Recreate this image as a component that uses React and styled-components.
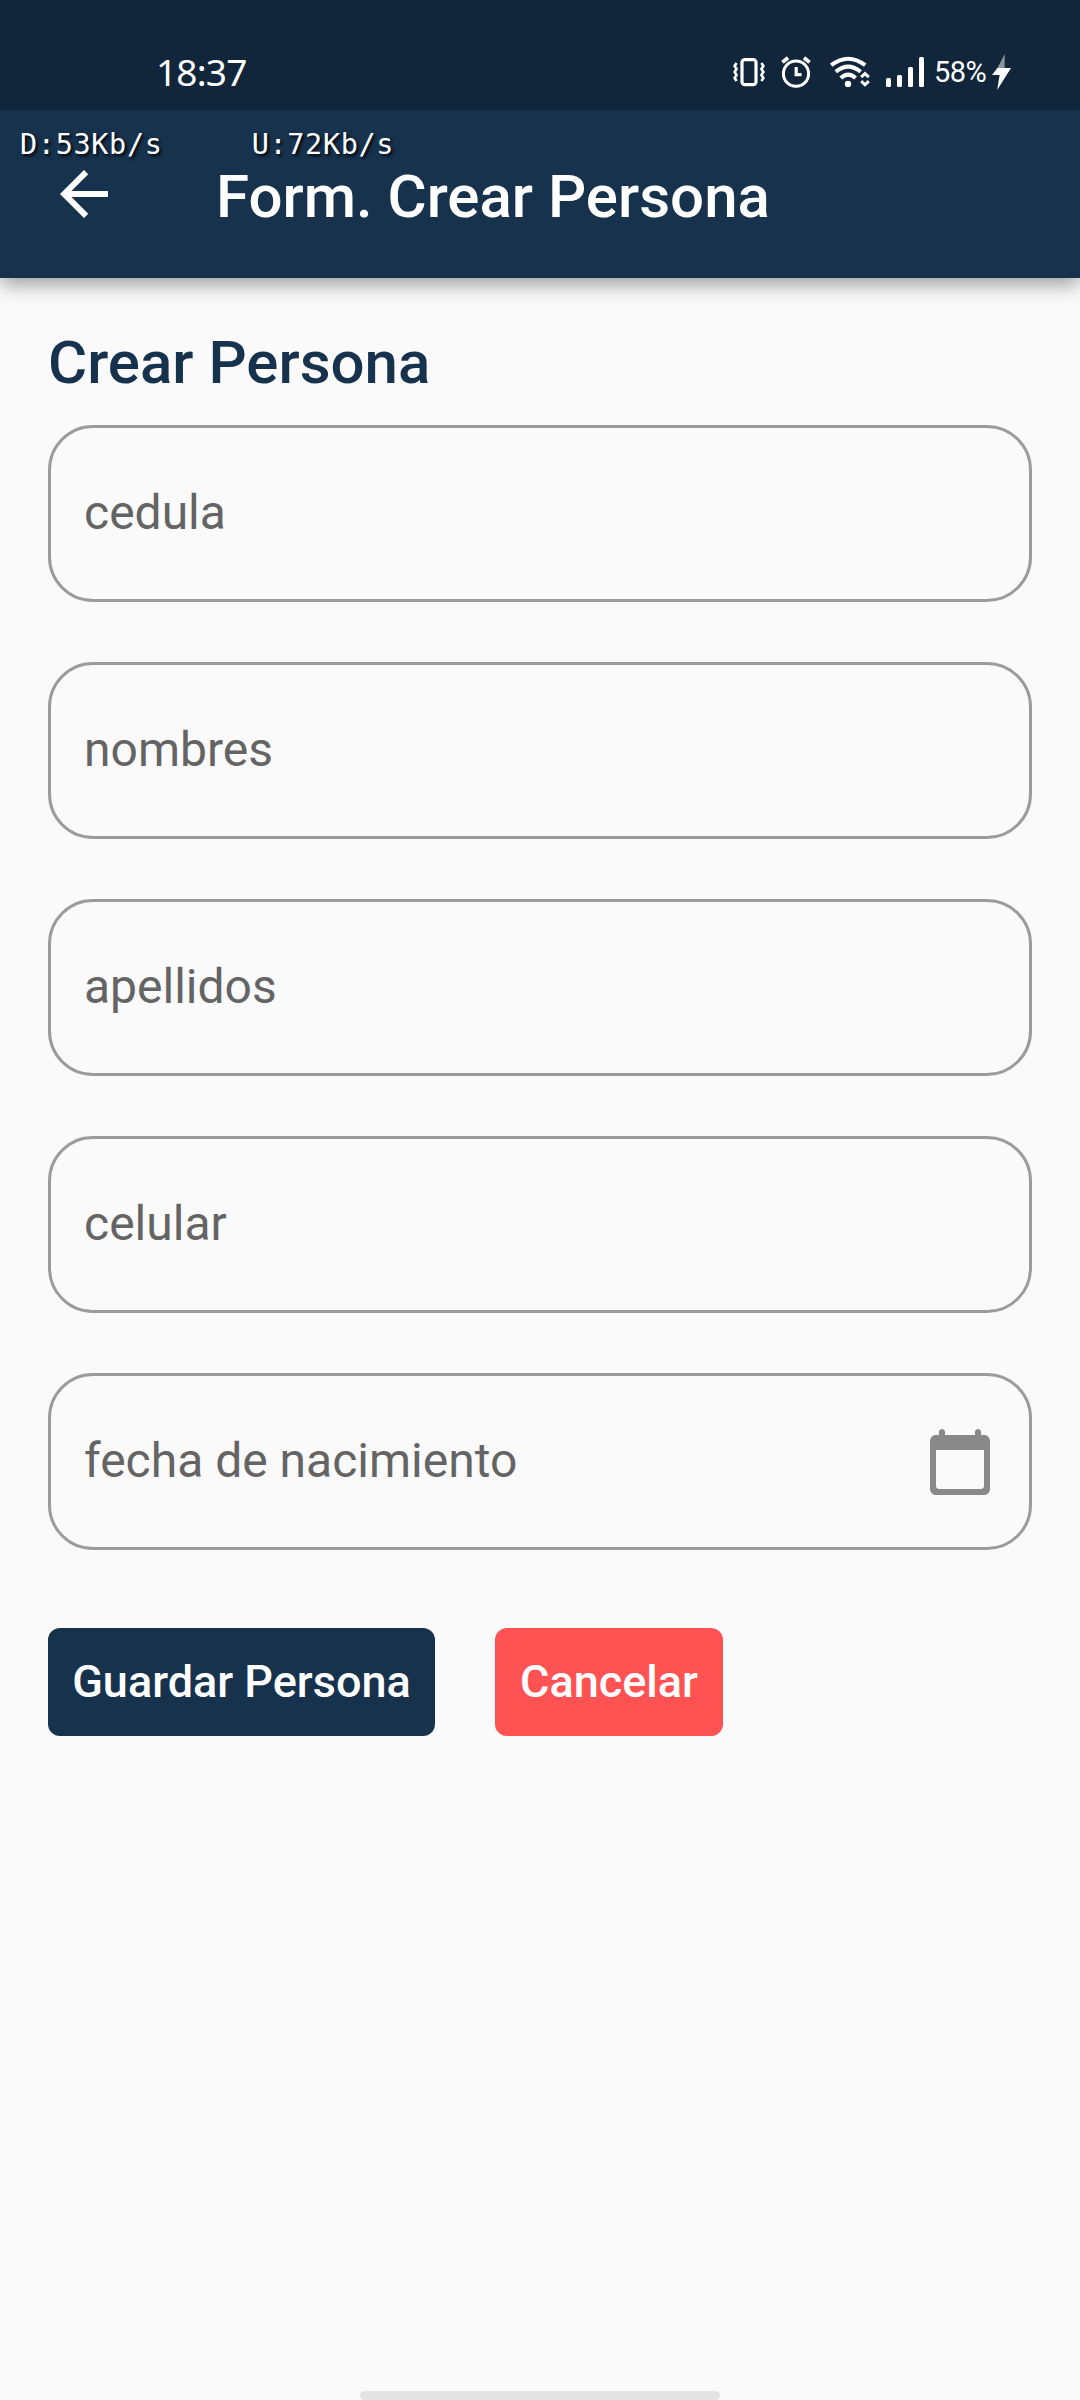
import React from "react";
import styled, { createGlobalStyle } from "styled-components";

const GlobalStyle = createGlobalStyle`
  *, *::before, *::after { box-sizing: border-box; }
  html, body { margin: 0; padding: 0; background: #fafafa; }
  body { font-family: Roboto, "Noto Sans", sans-serif; }
`;

const navy = "#17324d";

const Screen = styled.div`
  display: flex;
  flex-direction: column;
  width: 1080px;
  height: 2400px;
  background: #fafafa;
  overflow: hidden;
`;

const Header = styled.header`
  position: relative;
  background: ${navy};
  box-shadow: 0 7px 18px rgba(0, 0, 0, 0.36);
`;

const StatusBar = styled.div`
  display: flex;
  align-items: center;
  justify-content: space-between;
  height: 110px;
  padding: 34px 68px 0 156px;
  background: #11263a;
  color: #fff;
`;

const Clock = styled.span`
  font: 400 37px/44px "Noto Sans", Roboto, sans-serif;
  letter-spacing: -0.8px;
`;

const StatusIcons = styled.div`
  display: flex;
  align-items: center;
`;

const StatusIcon = styled.svg`
  display: block;
  flex: none;
  width: ${(p) => p.$w}px;
  height: 36px;
  margin-right: ${(p) => p.$gap || 0}px;
`;

const BatteryText = styled.span`
  width: 58px;
  font: 400 29px/36px Roboto, sans-serif;
  letter-spacing: -0.6px;
  white-space: nowrap;
`;

const AppBar = styled.div`
  display: flex;
  align-items: center;
  gap: 96px;
  height: 168px;
  padding-left: 48px;
  color: #fff;
`;

const BackButton = styled.button`
  display: flex;
  padding: 0;
  border: 0;
  background: none;
  color: inherit;
`;

const Icon = styled.svg`
  display: block;
  flex: none;
  width: 72px;
  height: 72px;
  fill: currentColor;
`;

const AppTitle = styled.h1`
  margin: 6px 0 0;
  font-size: 60px;
  font-weight: 500;
  line-height: 70px;
`;

const NetSpeed = styled.div`
  position: absolute;
  left: 20px;
  top: 127px;
  color: #fff;
  font: 400 28.5px/36px "DejaVu Sans Mono", monospace;
  letter-spacing: 0.66px;
  white-space: pre;
  text-shadow: 2px 2px 3px rgba(0, 0, 0, 0.9);
`;

const Form = styled.form`
  display: flex;
  flex-direction: column;
  flex: 1;
  padding: 50px 48px 0;
`;

const FormTitle = styled.h2`
  margin: 0 0 27px;
  color: ${navy};
  font-size: 60px;
  font-weight: 500;
  line-height: 70px;
`;

const Fields = styled.div`
  display: flex;
  flex-direction: column;
  gap: 60px;
`;

const Field = styled.label`
  display: flex;
  align-items: center;
  justify-content: space-between;
  height: 177px;
  padding: 0 33px;
  border: 3px solid #9b9b9b;
  border-radius: 45px;
  color: #646464;
  font-size: 48px;
  line-height: 56px;
`;

const FieldText = styled.span`
  padding-bottom: 2px;
`;

const FieldIcon = styled(Icon)`
  color: #898989;
`;

const Actions = styled.div`
  display: flex;
  gap: 60px;
  margin-top: 78px;
`;

const Button = styled.button`
  height: 108px;
  width: ${(p) => p.$width}px;
  padding: 0;
  border: 0;
  border-radius: 12px;
  background: ${(p) => p.$color};
  color: #fff;
  font: 500 45px/52px Roboto, sans-serif;
  white-space: nowrap;
`;

const HomeHandle = styled.div`
  align-self: center;
  width: 360px;
  height: 9px;
  border-radius: 5px;
  background: #e4e4e4;
`;

const VibrateIcon = () => (
  <StatusIcon $w={32} $gap={16} viewBox="0 0 32 36" fill="none" stroke="#fff">
    <rect x="9" y="5.6" width="14" height="25" rx="2.8" strokeWidth="3.2" />
    <path d="M3.6 9 L1.6 12 L3.6 15 L1.6 18 L3.6 21 L1.6 24 L3.6 27" strokeWidth="2.6" />
    <path d="M28.4 9 L30.4 12 L28.4 15 L30.4 18 L28.4 21 L30.4 24 L28.4 27" strokeWidth="2.6" />
  </StatusIcon>
);

const AlarmIcon = () => (
  <StatusIcon $w={30} $gap={19} viewBox="0 0 30 36" fill="none" stroke="#fff">
    <circle cx="15" cy="19.7" r="12.6" strokeWidth="3" />
    <path d="M15.2 13 V20.6 H20.5" strokeWidth="3.2" />
    <path d="M1.4 8.4 L7 3.8 M28.6 8.4 L23 3.8" strokeWidth="3.8" />
  </StatusIcon>
);

const WifiIcon = () => (
  <StatusIcon $w={42} $gap={14} viewBox="0 0 42 36" fill="none" stroke="#fff">
    <path d="M1.2 11.2 Q18.2 -1.8 35.2 11.2" strokeWidth="4" />
    <path d="M5.8 17.8 Q18.2 7.4 30.6 17.8" strokeWidth="4" />
    <path d="M10.8 24 Q18.2 17.4 25.6 24" strokeWidth="4" />
    <circle cx="18" cy="29.9" r="3.2" fill="#fff" stroke="none" />
    <path d="M31.2 23.2 L35 19.6 L38.8 23.2 M31.2 27.2 L35 30.8 L38.8 27.2" strokeWidth="3" />
  </StatusIcon>
);

const SignalIcon = () => (
  <StatusIcon $w={38} $gap={10} viewBox="0 0 38 36" fill="#fff">
    <rect x="0" y="24" width="5" height="9" rx="1.5" />
    <rect x="11" y="21" width="5" height="12" rx="1.5" />
    <rect x="22" y="13" width="5" height="20" rx="1.5" />
    <rect x="33" y="3" width="5" height="30" rx="1.5" />
  </StatusIcon>
);

const ChargeIcon = () => (
  <StatusIcon $w={20} viewBox="0 0 20 36">
    <path d="M12.8 0 L5.4 14 H12.6 Z" fill="#8a949e" />
    <path d="M5.4 14 L0 21 H7.6 L5.2 36 L19 14 Z" fill="#fff" />
  </StatusIcon>
);

const BackArrow = () => (
  <Icon viewBox="0 0 24 24">
    <path d="M20 11H7.83l5.59-5.59L12 4l-8 8 8 8 1.41-1.41L7.83 13H20v-2z" />
  </Icon>
);

const CalendarIcon = () => (
  <FieldIcon viewBox="0 0 24 24">
    <path d="M20 3h-1V2c0-.55-.45-1-1-1s-1 .45-1 1v1H7V2c0-.55-.45-1-1-1s-1 .45-1 1v1H4c-1.1 0-2 .9-2 2v16c0 1.1.9 2 2 2h16c1.1 0 2-.9 2-2V5c0-1.1-.9-2-2-2zm-1 18H5c-.55 0-1-.45-1-1V8h16v12c0 .55-.45 1-1 1z" />
  </FieldIcon>
);

const fields = [
  { label: "cedula" },
  { label: "nombres" },
  { label: "apellidos" },
  { label: "celular" },
  { label: "fecha de nacimiento", icon: <CalendarIcon /> },
];

export default function App() {
  return (
    <>
      <GlobalStyle />
      <Screen>
        <Header>
          <StatusBar>
            <Clock>18:37</Clock>
            <StatusIcons>
              <VibrateIcon />
              <AlarmIcon />
              <WifiIcon />
              <SignalIcon />
              <BatteryText>58%</BatteryText>
              <ChargeIcon />
            </StatusIcons>
          </StatusBar>
          <AppBar>
            <BackButton type="button" aria-label="Volver">
              <BackArrow />
            </BackButton>
            <AppTitle>Form. Crear Persona</AppTitle>
          </AppBar>
          <NetSpeed>{"D:53Kb/s     U:72Kb/s"}</NetSpeed>
        </Header>
        <Form>
          <FormTitle>Crear Persona</FormTitle>
          <Fields>
            {fields.map((f) => (
              <Field key={f.label}>
                <FieldText>{f.label}</FieldText>
                {f.icon}
              </Field>
            ))}
          </Fields>
          <Actions>
            <Button type="button" $width={387} $color={navy}>Guardar Persona</Button>
            <Button type="button" $width={228} $color="#ff5252">Cancelar</Button>
          </Actions>
        </Form>
        <HomeHandle />
      </Screen>
    </>
  );
}
